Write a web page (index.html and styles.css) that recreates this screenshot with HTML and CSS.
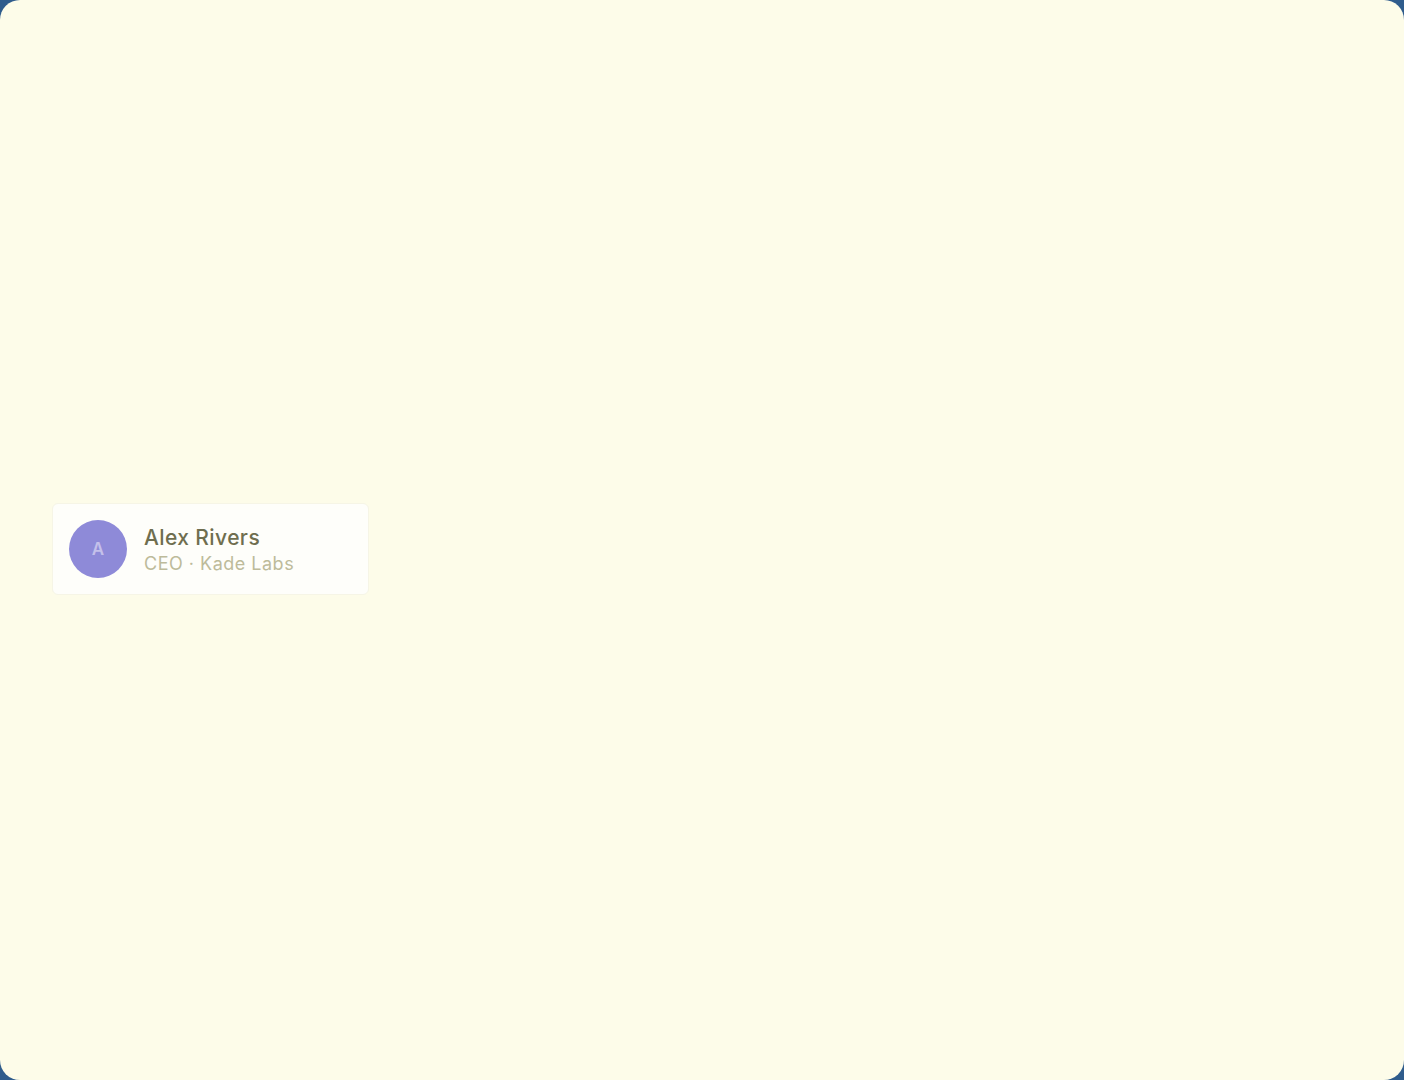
FILE: index.html
```html
<!DOCTYPE html>
<html>
	<head>
		<meta charset="UTF-8">
		<title>Team</title>
		<link rel="stylesheet" href="styles.css">
	</head>
	<body>
		<div id="stage">
			<div class="person">
				<div class="avatar">A</div>
				<div class="info">
					<div class="name">Alex Rivers</div>
					<div class="role">CEO · Kade Labs</div>
				</div>
			</div>
		</div>
	</body>
</html>
```

FILE: styles.css
```css
		html,
		body {
			margin: 0;
			padding: 0;
			background: #2f5c8c;
		}

		#stage {
			width: 1404px;
			height: 1080px;
			box-sizing: border-box;
			background: #fdfce9;
			border-radius: 20px;
			overflow: hidden;
			padding: 503px 0 0 52px;
			font-family: Inter, "Noto Sans", sans-serif;
		}

		.person {
			width: 317px;
			height: 92px;
			box-sizing: border-box;
			display: flex;
			align-items: center;
			gap: 17px;
			padding: 0 16px;
			background: #fefefa;
			border: 1px solid #f6f5e6;
			border-radius: 6px;
		}

		.avatar {
			width: 58px;
			height: 58px;
			border-radius: 50%;
			background: #8e8ad8;
			color: #c4c0ea;
			font-size: 17px;
			font-weight: 600;
			display: flex;
			justify-content: center;
			align-items: center;
			flex-shrink: 0;
		}

		.info {
			display: flex;
			flex-direction: column;
			gap: 3px;
			padding-top: 2px;
		}

		.name {
			font-size: 21px;
			font-weight: 500;
			color: #6f6e4f;
			line-height: 24px;
			letter-spacing: 0.4px;
		}

		.role {
			font-size: 18px;
			color: #bdbb9a;
			line-height: 22px;
			letter-spacing: 0.5px;
		}
```
